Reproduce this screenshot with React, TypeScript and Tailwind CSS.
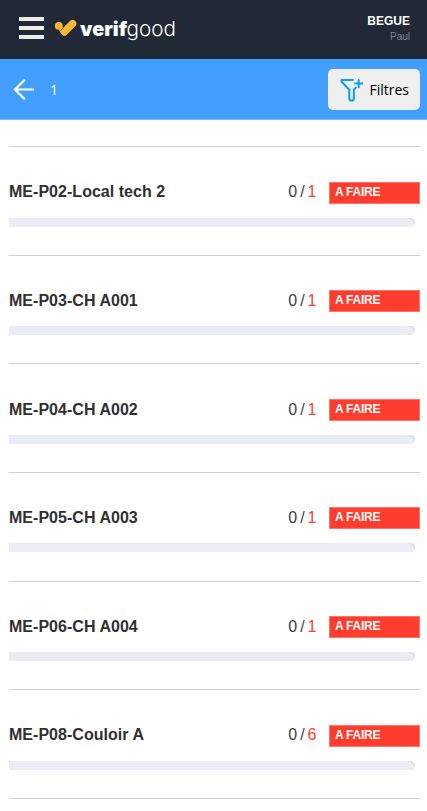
import React from 'react';

interface Room {
  name: string;
  done: number;
  total: number;
}

const rooms: Room[] = [
  { name: 'ME-P02-Local tech 2', done: 0, total: 1 },
  { name: 'ME-P03-CH A001', done: 0, total: 1 },
  { name: 'ME-P04-CH A002', done: 0, total: 1 },
  { name: 'ME-P05-CH A003', done: 0, total: 1 },
  { name: 'ME-P06-CH A004', done: 0, total: 1 },
  { name: 'ME-P08-Couloir A', done: 0, total: 6 },
];

const Logo: React.FC = () => (
  <svg width="124" height="30" viewBox="0 0 124 30" className="ml-[10px]" role="img" aria-label="verifgood">
    <circle cx="4.8" cy="11.8" r="3.9" fill="#fbb731" />
    <path d="M10.6 17.6L18.6 9.6" stroke="#fbb731" strokeWidth="7.4" strokeLinecap="round" />
    <path d="M4.8 16.3L8.4 12.8L13.5 17.5L12.8 20.5Q10.4 23 8.1 20.6Z" fill="#fbb731" />
    <path d="M5.2 16.9Q8.6 16.3 9.6 12.8" stroke="#212936" strokeWidth="0.5" fill="none" />
    <text
      x="26"
      y="21.5"
      textLength="47"
      lengthAdjust="spacingAndGlyphs"
      fill="#fff"
      className="font-['Inter',sans-serif] text-[19.5px] font-black"
    >
      verif
    </text>
    <text
      x="72.5"
      y="21.5"
      textLength="49.5"
      lengthAdjust="spacingAndGlyphs"
      fill="#fff"
      className="font-['Inter',sans-serif] text-[20.5px] font-light"
    >
      good
    </text>
  </svg>
);

const Header: React.FC = () => (
  <header className="flex h-[59px] items-start bg-[#212936] pl-[19px] pr-[17px]">
    <button className="mt-[17px] flex flex-col gap-[5px]" aria-label="Menu">
      <span className="h-1 w-[25px] bg-[#ececec]" />
      <span className="h-1 w-[25px] bg-[#ececec]" />
      <span className="h-1 w-[25px] bg-[#ececec]" />
    </button>
    <div className="mt-[14px]">
      <Logo />
    </div>
    <div className="ml-auto mt-[13px] text-right">
      <div className="text-[12px] font-bold leading-4 text-white">BEGUE</div>
      <div className="text-[10px] leading-4 text-[#7b8492]">Paul</div>
    </div>
  </header>
);

const FilterBar: React.FC = () => (
  <div className="flex h-[61px] items-center border-b border-[#78b8fb] bg-[#429eff] pl-[13px] pr-[7px]">
    <svg width="22" height="22" viewBox="0 0 22 22" fill="none" stroke="#fff" strokeWidth="2.2" strokeLinecap="round">
      <path d="M20 11.5H2M11.3 2.3L2 11.5L11.3 20.7" />
    </svg>
    <span className="ml-[15px] font-['Open_Sans',sans-serif] text-[14px] text-white">1</span>
    <button className="ml-auto mt-px flex h-[41px] w-[92px] items-center rounded-[5px] bg-[#efefef] pl-3 font-['Open_Sans',sans-serif] text-[14px] text-black">
      <svg
        width="24"
        height="24"
        viewBox="0 0 24 24"
        fill="none"
        stroke="#109cf9"
        strokeWidth="2"
        strokeLinecap="round"
        strokeLinejoin="round"
      >
        <path d="M12.8 2H1.5V3.8L9.3 11.7V20.2C9.3 23.4 13.9 23.4 13.9 20.2V11.7L15.9 9.6" />
        <path d="M18.7 2V9.2M15.1 5.6H22.3" />
      </svg>
      <span className="ml-[5.5px]">Filtres</span>
    </button>
  </div>
);

const RoomRow: React.FC<{ room: Room }> = ({ room }) => (
  <li className="h-[108.6px] border-t border-[#d0d0d0] pt-[34.2px]">
    <div className="flex h-[22px] items-center text-[16px] leading-[22px]">
      <span className="font-bold tracking-[0.03px] text-[#303030]">{room.name}</span>
      <span className="ml-auto mr-[12.5px] flex text-[#404040]">
        {room.done}
        <span className="ml-[3px]">/</span>
        <span className="ml-[3px] text-[#ff3d2e]">{room.total}</span>
      </span>
      <span className="mt-[0.6px] h-[22px] w-[91px] border border-[#ff7468] bg-[#ff3d2e] pl-[5px] text-[12px] font-bold leading-[19px] tracking-[-0.25px] text-white">
        A FAIRE
      </span>
    </div>
    <div className="mr-[5px] mt-[14.3px] h-[9px] overflow-hidden rounded-r-[5px] bg-[#dedede]">
      <div className="h-full rounded-tl-[2px] rounded-tr-[9px] bg-[#eaedf5]" />
    </div>
  </li>
);

export default function App() {
  return (
    <div className="h-[811px] w-full overflow-hidden bg-white font-['Liberation_Sans',Arial,sans-serif]">
      <Header />
      <FilterBar />
      <ul className="ml-[9px] mr-[7px] mt-[26.2px] border-b border-[#d0d0d0]">
        {rooms.map((room) => (
          <RoomRow key={room.name} room={room} />
        ))}
      </ul>
    </div>
  );
}
